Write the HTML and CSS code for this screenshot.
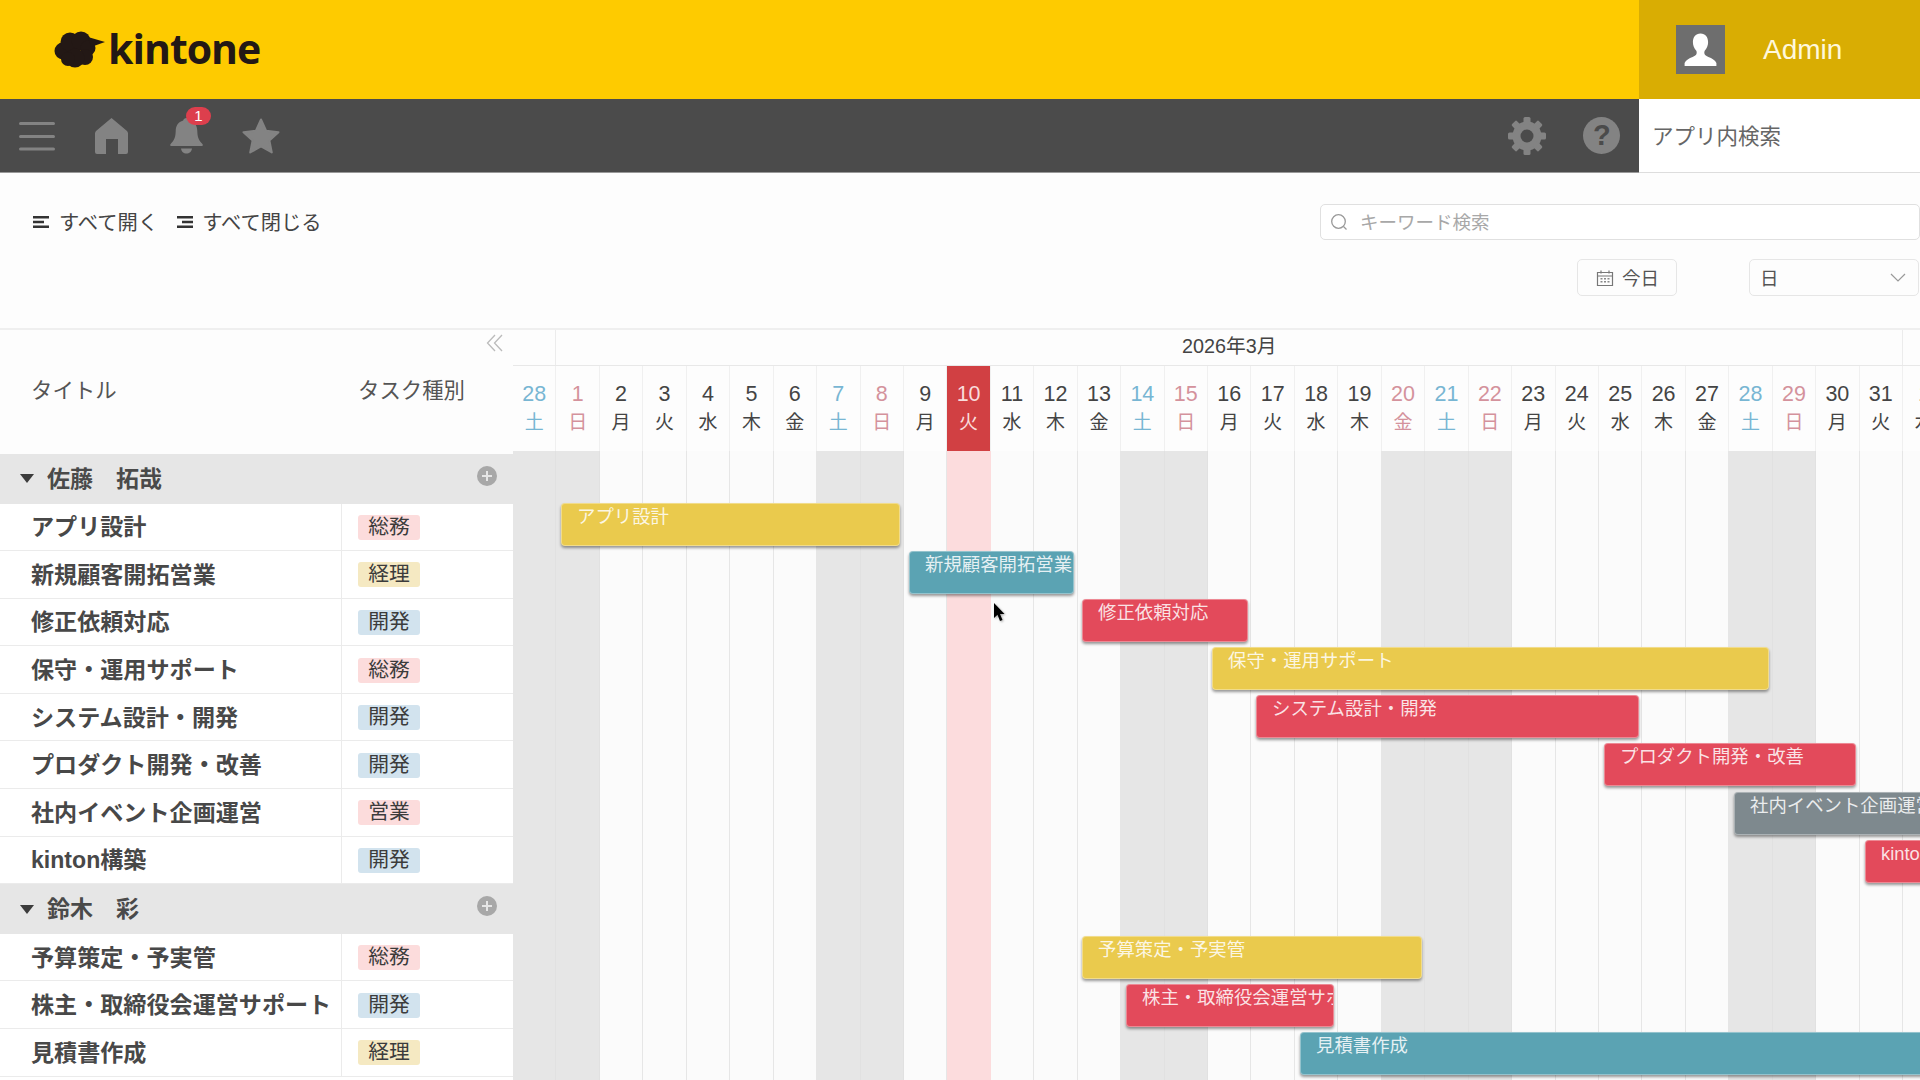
FILE: index.html
```html
<!DOCTYPE html>
<html lang="ja">
<head>
<meta charset="utf-8">
<title>kintone ガントチャート</title>
<link rel="stylesheet" href="styles.css">
</head>
<body>
<header class="top">
  <div class="logo">
    <svg class="logo-cloud" viewBox="54 30 52 37" width="52" height="37"><g fill="#231815"><circle cx="63" cy="50" r="8.5"/><circle cx="70" cy="41" r="9.5"/><circle cx="81" cy="40" r="9.5"/><circle cx="88" cy="47" r="7.5"/><circle cx="85" cy="56" r="8"/><circle cx="75" cy="57" r="9.5"/><circle cx="68" cy="58" r="7"/><path d="M88 36 L105 41 L91 46 Z"/></g></svg>
    <span class="logo-text">kintone</span>
  </div>
  <div class="admin">
    <div class="avatar"><svg viewBox="0 0 49 49" width="49" height="49"><path fill="#fff" d="M24.5 8.5c-5 0-7.6 4-7.6 8.6 0 3.4 1.3 6.5 3.2 8.4.6.7.7 2 .5 3-.4 1.800-2 2.700-4 3.400-3.500 1.300-6.800 3-8 6.100v2.900h31.800v-2.900c-1.200-3.100-4.500-4.800-8-6.100-2-.7-3.600-1.600-4-3.400-.2-1 0-2.300.5-3 1.900-1.900 3.200-5 3.200-8.400 0-4.600-2.600-8.600-7.600-8.600z"/></svg></div>
    <span class="admin-name">Admin</span>
  </div>
</header>
<nav class="bar">
  <div class="bar-dark">
    <div class="bar-cell"><svg viewBox="0 0 36 30" width="36" height="30"><path d="M1.500 2.500h33M1.500 15.500h33M1.500 28h33" stroke="#838383" stroke-width="3" stroke-linecap="round" fill="none"/></svg></div>
    <div class="bar-cell"><svg viewBox="0 0 33 36" width="33" height="36"><path fill="#838383" d="M16.500 0 L32 13 Q33 14 33 15.500 V34 Q33 36 31 36 H23 V21 H11 V36 H2 Q0 36 0 34 V15.500 Q0 14 1 13 Z"/></svg></div>
    <div class="bar-cell bell"><svg viewBox="0 0 33 36" width="33" height="36"><path fill="#838383" d="M16.500 0c1.800 0 3 1.100 3.300 2.600 5 1.400 7.400 5.300 7.500 10.400.1 5.700 1.300 9.300 5.100 13 .8.800.4 2-.8 2H1.400c-1.200 0-1.600-1.200-.8-2 3.800-3.700 5-7.300 5.100-13 .1-5.100 2.500-9 7.500-10.400C13.500 1.100 14.700 0 16.500 0zM11 30.500h11c-.3 3-2.700 5-5.500 5s-5.200-2-5.500-5z"/></svg><span class="badge">1</span></div>
    <div class="bar-cell"><svg viewBox="0 0 38 36" width="38" height="36"><path fill="#838383" stroke="#838383" stroke-width="2" stroke-linejoin="round" d="M19 1.500 L24.200 12.800 L36.500 14.200 L27.400 22.500 L29.800 34.500 L19 28.500 L8.200 34.500 L10.600 22.500 L1.500 14.200 L13.800 12.800 Z"/></svg></div>
    <div class="bar-spacer"></div>
    <div class="bar-cell"><svg viewBox="-20 -20 40 40" width="40" height="40"><g fill="#838383"><circle r="14.500"/><g id="teeth"><rect x="-3.500" y="-19" width="7" height="8" rx="1.500"/><rect x="-3.500" y="11" width="7" height="8" rx="1.500"/><rect x="11" y="-3.500" width="8" height="7" rx="1.500"/><rect x="-19" y="-3.500" width="8" height="7" rx="1.500"/><rect x="-3.500" y="-19" width="7" height="8" rx="1.500" transform="rotate(45)"/><rect x="-3.500" y="11" width="7" height="8" rx="1.500" transform="rotate(45)"/><rect x="11" y="-3.500" width="8" height="7" rx="1.500" transform="rotate(45)"/><rect x="-19" y="-3.500" width="8" height="7" rx="1.500" transform="rotate(45)"/></g></g><circle r="6.500" fill="#4b4b4b"/></svg></div>
    <div class="bar-cell"><span class="help">?</span></div>
  </div>
  <div class="app-search">アプリ内検索</div>
</nav>
<section class="controls">
  <div class="tools">
    <span class="tool"><svg viewBox="0 0 16 12" width="16" height="12"><path d="M0 1.200h16M0 6h11M0 10.800h16" stroke="#333" stroke-width="2.400" fill="none"/></svg>すべて開く</span>
    <span class="tool"><svg viewBox="0 0 16 12" width="16" height="12"><path d="M0 1.200h16M5 6h11M0 10.800h16" stroke="#333" stroke-width="2.400" fill="none"/></svg>すべて閉じる</span>
  </div>
  <div class="filters">
    <div class="search"><svg viewBox="0 0 18 18" width="18" height="18"><circle cx="8.500" cy="8.500" r="6.800" fill="none" stroke="#999" stroke-width="1.300"/><path d="M13.500 13.500l3 3" stroke="#999" stroke-width="1.300"/></svg><span>キーワード検索</span></div>
    <div class="view-row">
      <div class="today"><svg viewBox="0 0 18 18" width="18" height="18"><path d="M1.500 3.500h15v13h-15zM1.500 7h15M5 1.500v3M13 1.500v3" fill="none" stroke="#777" stroke-width="1.200"/><path d="M4.500 9.800h9M4.500 12.800h9" stroke="#888" stroke-width="1.500" stroke-dasharray="2 1.500"/></svg><span>今日</span></div>
      <div class="select"><span>日</span><svg viewBox="0 0 16 9" width="16" height="9"><path d="M1 1l7 7 7-7" fill="none" stroke="#999" stroke-width="1.200"/></svg></div>
    </div>
  </div>
</section>
<main class="gantt">
  <aside class="side">
    <div class="side-head">
      <svg class="collapse" viewBox="0 0 17 18" width="17" height="18"><path d="M9 1L1.500 9 9 17M16 1L8.500 9 16 17" fill="none" stroke="#bbb" stroke-width="1.300"/></svg>
      <div class="head-title">タイトル</div>
      <div class="head-type">タスク種別</div>
    </div>
    <div class="group"><span class="caret"></span><span class="group-name">佐藤　拓哉</span><span class="plus"></span></div>
    <div class="row"><div class="row-title">アプリ設計</div><div class="row-type"><span class="tag pink">総務</span></div></div>
    <div class="row"><div class="row-title">新規顧客開拓営業</div><div class="row-type"><span class="tag tan">経理</span></div></div>
    <div class="row"><div class="row-title">修正依頼対応</div><div class="row-type"><span class="tag blue">開発</span></div></div>
    <div class="row"><div class="row-title">保守・運用サポート</div><div class="row-type"><span class="tag pink">総務</span></div></div>
    <div class="row"><div class="row-title">システム設計・開発</div><div class="row-type"><span class="tag blue">開発</span></div></div>
    <div class="row"><div class="row-title">プロダクト開発・改善</div><div class="row-type"><span class="tag blue">開発</span></div></div>
    <div class="row"><div class="row-title">社内イベント企画運営</div><div class="row-type"><span class="tag pink">営業</span></div></div>
    <div class="row"><div class="row-title">kinton構築</div><div class="row-type"><span class="tag blue">開発</span></div></div>
    <div class="group"><span class="caret"></span><span class="group-name">鈴木　彩</span><span class="plus"></span></div>
    <div class="row"><div class="row-title">予算策定・予実管</div><div class="row-type"><span class="tag pink">総務</span></div></div>
    <div class="row"><div class="row-title">株主・取締役会運営サポート</div><div class="row-type"><span class="tag blue">開発</span></div></div>
    <div class="row"><div class="row-title">見積書作成</div><div class="row-type"><span class="tag tan">経理</span></div></div>
  </aside>
  <div class="timeline">
    <div class="months"><div class="month m-prev"></div><div class="month m-cur">2026年3月</div><div class="month m-next"></div></div>
    <div class="days">
      <div class="day sat"><b>28</b><i>土</i></div>
      <div class="day sun"><b>1</b><i>日</i></div>
      <div class="day"><b>2</b><i>月</i></div>
      <div class="day"><b>3</b><i>火</i></div>
      <div class="day"><b>4</b><i>水</i></div>
      <div class="day"><b>5</b><i>木</i></div>
      <div class="day"><b>6</b><i>金</i></div>
      <div class="day sat"><b>7</b><i>土</i></div>
      <div class="day sun"><b>8</b><i>日</i></div>
      <div class="day"><b>9</b><i>月</i></div>
      <div class="day now"><b>10</b><i>火</i></div>
      <div class="day"><b>11</b><i>水</i></div>
      <div class="day"><b>12</b><i>木</i></div>
      <div class="day"><b>13</b><i>金</i></div>
      <div class="day sat"><b>14</b><i>土</i></div>
      <div class="day sun"><b>15</b><i>日</i></div>
      <div class="day"><b>16</b><i>月</i></div>
      <div class="day"><b>17</b><i>火</i></div>
      <div class="day"><b>18</b><i>水</i></div>
      <div class="day"><b>19</b><i>木</i></div>
      <div class="day sun"><b>20</b><i>金</i></div>
      <div class="day sat"><b>21</b><i>土</i></div>
      <div class="day sun"><b>22</b><i>日</i></div>
      <div class="day"><b>23</b><i>月</i></div>
      <div class="day"><b>24</b><i>火</i></div>
      <div class="day"><b>25</b><i>水</i></div>
      <div class="day"><b>26</b><i>木</i></div>
      <div class="day"><b>27</b><i>金</i></div>
      <div class="day sat"><b>28</b><i>土</i></div>
      <div class="day sun"><b>29</b><i>日</i></div>
      <div class="day"><b>30</b><i>月</i></div>
      <div class="day"><b>31</b><i>火</i></div>
      <div class="day"><b>1</b><i>水</i></div>
    </div>
    <div class="chart">
      <div class="cols">
        <div class="col off"></div><div class="col off"></div><div class="col"></div><div class="col"></div><div class="col"></div><div class="col"></div><div class="col"></div><div class="col off"></div><div class="col off"></div><div class="col"></div><div class="col today-col"></div><div class="col"></div><div class="col"></div><div class="col"></div><div class="col off"></div><div class="col off"></div><div class="col"></div><div class="col"></div><div class="col"></div><div class="col"></div><div class="col off"></div><div class="col off"></div><div class="col off"></div><div class="col"></div><div class="col"></div><div class="col"></div><div class="col"></div><div class="col"></div><div class="col off"></div><div class="col off"></div><div class="col"></div><div class="col"></div><div class="col"></div>
      </div>
      <div class="task yellow" style="left:48px;top:52px;width:339px">アプリ設計</div>
      <div class="task teal" style="left:396px;top:100px;width:165px">新規顧客開拓営業</div>
      <div class="task red" style="left:569px;top:148px;width:166px">修正依頼対応</div>
      <div class="task yellow" style="left:699px;top:196px;width:557px">保守・運用サポート</div>
      <div class="task red" style="left:743px;top:244px;width:383px">システム設計・開発</div>
      <div class="task red" style="left:1091px;top:292px;width:252px">プロダクト開発・改善</div>
      <div class="task grey" style="left:1221px;top:341px;width:300px">社内イベント企画運営</div>
      <div class="task red" style="left:1352px;top:389px;width:200px">kinton構築</div>
      <div class="task yellow" style="left:569px;top:485px;width:340px">予算策定・予実管</div>
      <div class="task red" style="left:613px;top:533px;width:208px">株主・取締役会運営サポート</div>
      <div class="task teal" style="left:787px;top:581px;width:800px">見積書作成</div>
      <svg class="cursor" viewBox="0 0 12 20" width="12" height="20"><path d="M1 0 L1 15 L4.500 11.800 L7 18 L9.500 17 L7 11 L11.500 11 Z" fill="#000"/></svg>
    </div>
  </div>
</main>
</body>
</html>
```
FILE: styles.css
```css
* { box-sizing: border-box; }
html, body { margin: 0; height: 1080px; overflow: hidden; }
body {
  display: flex;
  flex-direction: column;
  background: #fdfdfd;
  color: #444;
  font-family: "Liberation Sans", "Noto Sans CJK JP", sans-serif;
}

/* top header */
.top { display: flex; flex: none; height: 99px; background: #fecb00; }
.logo { display: flex; flex: 1; align-items: center; padding-left: 54px; }
.logo-cloud { flex: none; margin-top: -1px; }
.logo-text {
  margin: -3px 0 0 2px;
  font: 700 41px/1 "Open Sans", sans-serif;
  letter-spacing: -1px;
  color: #231815;
}
.admin {
  display: flex;
  align-items: center;
  flex: none;
  width: 281px;
  padding-left: 37px;
  background: #d9ad03;
}
.avatar { width: 49px; height: 49px; background: #6e6e6e; }
.avatar svg { display: block; }
.admin-name { margin-left: 38px; font-size: 28px; color: #fff8dc; }

/* nav bar */
.bar { display: flex; flex: none; height: 74px; }
.bar-dark { display: flex; flex: 1; background: #4b4b4b; border-bottom: 1px solid #999; }
.bar-cell { position: relative; display: flex; align-items: center; justify-content: center; width: 74.500px; }
.bar-cell svg { display: block; }
.bar-spacer { flex: 1; }
.badge {
  position: absolute;
  left: 37px;
  top: 8px;
  width: 25px;
  height: 18px;
  border-radius: 9px;
  background: #dd3f4d;
  color: #fff;
  font-size: 15px;
  line-height: 18px;
  text-align: center;
}
.help {
  width: 37px;
  height: 37px;
  border-radius: 50%;
  background: #838383;
  color: #4b4b4b;
  font-size: 29px;
  font-weight: 700;
  line-height: 37px;
  text-align: center;
}
.app-search {
  display: flex;
  align-items: center;
  flex: none;
  width: 281px;
  padding: 0 0 3px 13px;
  background: #fff;
  border-bottom: 1px solid #ddd;
  font-size: 21.500px;
  color: #666;
}

/* controls */
.controls { display: flex; justify-content: space-between; flex: none; height: 155px; }
.tools { display: flex; gap: 19px; padding: 36px 0 0 33px; height: 70px; }
.tool { display: flex; align-items: center; gap: 10px; height: 26px; padding-bottom: 2px; font-size: 20.300px; color: #444; }
.tool + .tool { gap: 9px; }
.tool svg { margin-top: 2px; }
.filters { display: flex; flex-direction: column; align-items: flex-end; padding-top: 31px; }
.search {
  display: flex;
  align-items: center;
  gap: 12px;
  width: 600px;
  height: 36px;
  padding-left: 9px;
  border: 1.500px solid #e0e0e0;
  border-radius: 5px;
  background: #fff;
  font-size: 18.500px;
  color: #a8a8a8;
}
.search span { margin-top: -2px; }
.view-row { display: flex; gap: 72px; margin-top: 19px; margin-right: 1px; }
.today {
  display: flex;
  align-items: center;
  gap: 8px;
  width: 100px;
  height: 37px;
  padding-left: 18px;
  border: 1.500px solid #e6e6e6;
  border-radius: 5px;
  font-size: 18.500px;
  color: #555;
}
.today span { margin-top: -2px; }
.select {
  display: flex;
  align-items: center;
  justify-content: space-between;
  width: 170px;
  height: 37px;
  padding: 0 12px 0 10px;
  border: 1.500px solid #e6e6e6;
  border-radius: 5px;
  font-size: 18.500px;
  color: #555;
}
.select span { margin-top: -2px; }

/* gantt */
.gantt { display: flex; flex: 1; min-height: 0; border-top: 2px solid #efefef; }
.side { position: relative; flex: none; width: 513px; overflow: hidden; background: #fff; }
.side-head {
  position: relative;
  display: flex;
  align-items: center;
  height: 124px;
  padding-bottom: 7px;
  background: #fdfdfd;
  font-size: 21.400px;
  color: #555;
}
.collapse { position: absolute; left: 486px; top: 4px; }
.head-title { width: 358px; padding-left: 31px; }
.group {
  position: relative;
  display: flex;
  align-items: center;
  height: 49.500px;
  padding-left: 20px;
  background: #e6e6e6;
  font-size: 23px;
  font-weight: 700;
  color: #4a4a4a;
}
.caret {
  width: 0;
  height: 0;
  border-style: solid;
  border-width: 9px 7px 0;
  border-color: #3c3c3c transparent transparent;
}
.group-name { margin: -4px 0 0 13px; }
.plus {
  position: absolute;
  left: 476.500px;
  top: 11.500px;
  width: 20px;
  height: 20px;
  border-radius: 50%;
  background:
    linear-gradient(#e6e6e6, #e6e6e6) center / 10px 2px no-repeat,
    linear-gradient(#e6e6e6, #e6e6e6) center / 2px 10px no-repeat,
    #a8a8a8;
}
.row { display: flex; height: 47.600px; border-bottom: 1.500px solid #ebebeb; }
.row-title {
  display: flex;
  align-items: center;
  width: 342px;
  padding: 0 0 3px 31px;
  border-right: 1px solid #ebebeb;
  font-size: 23.100px;
  font-weight: 700;
  white-space: nowrap;
  color: #484848;
}
.row-type { display: flex; align-items: center; padding: 1px 0 0 16px; }
.tag {
  width: 62px;
  height: 25px;
  border-radius: 3px;
  font-size: 20.800px;
  line-height: 24px;
  text-align: center;
  color: #3c3c3c;
}
.pink { background: #fcdcdc; }
.tan { background: #f5e9c2; }
.blue { background: #d2e3ee; }

.timeline { display: flex; flex: 1; flex-direction: column; min-width: 0; overflow: hidden; }
.months { display: flex; flex: none; width: 1434px; height: 36px; border-bottom: 1px solid #e8e8e8; }
.month { flex: none; border-right: 1px solid #ececec; line-height: 33px; text-align: center; font-size: 19.800px; color: #444; }
.m-prev { width: 43.400px; }
.m-cur { width: 1346.600px; }
.m-next { width: 43.400px; }
.days { display: grid; flex: none; grid-template-columns: repeat(33, 43.440px); height: 85px; }
.day {
  display: flex;
  flex-direction: column;
  align-items: center;
  justify-content: center;
  padding-bottom: 1px;
  border-right: 1px solid #f0f0f0;
  font-size: 21.500px;
  line-height: 28px;
  color: #444;
}
.day b { font-weight: 400; margin-bottom: 1px; }
.day i { font-style: normal; font-size: 19px; }
.sat { color: #78b6d3; }
.sun { color: #d4929c; }
.now { background: #d14043; color: #f9dcdc; }

.chart { position: relative; flex: 1; min-height: 0; }
.cols { display: grid; grid-template-columns: repeat(33, 43.440px); height: 100%; }
.col { background: #fbfbfb; border-right: 1px solid #e6e6e6; }
.off { background: #e6e6e6; border-right-color: #e1e1e1; }
.today-col { background: #fcdcdd; border-right-color: #fcdcdd; }
.task {
  position: absolute;
  height: 43px;
  padding-left: 15px;
  border: 1px solid rgba(255, 255, 255, .35);
  border-radius: 4px;
  box-shadow: 0 2px 3px rgba(0, 0, 0, .4);
  overflow: hidden;
  font-size: 18.400px;
  line-height: 26px;
  white-space: nowrap;
  color: rgba(255, 255, 255, .85);
}
.yellow { background: #eaca4d; }
.teal { background: #5ba3b3; }
.red { background: #e34a5b; }
.grey { background: #7e898e; }
.cursor { position: absolute; left: 480px; top: 152px; filter: drop-shadow(1px 1px 1px rgba(0, 0, 0, .35)); }
```
